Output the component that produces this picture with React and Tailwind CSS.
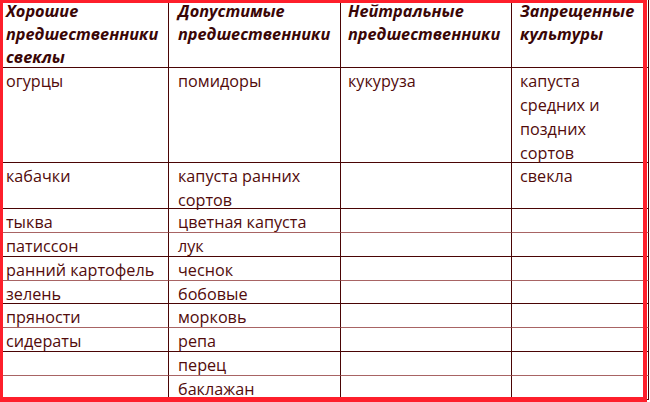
const header = [
  ['Хорошие', 'предшественники', 'свеклы'],
  ['Допустимые', 'предшественники'],
  ['Нейтральные', 'предшественники'],
  ['Запрещенные', 'культуры'],
]

// light — светлая нижняя линия строки
const rows = [
  { light: false, cells: [['огурцы'], ['помидоры'], ['кукуруза'], ['капуста', 'средних и', 'поздних', 'сортов']] },
  { light: false, cells: [['кабачки'], ['капуста ранних', 'сортов'], [], ['свекла']] },
  { light: true, cells: [['тыква'], ['цветная капуста'], [], []] },
  { light: false, cells: [['патиссон'], ['лук'], [], []] },
  { light: true, cells: [['ранний картофель'], ['чеснок'], [], []] },
  { light: false, cells: [['зелень'], ['бобовые'], [], []] },
  { light: true, cells: [['пряности'], ['морковь'], [], []] },
  { light: false, cells: [['сидераты'], ['репа'], [], []] },
  { light: true, cells: [[], ['перец'], [], []] },
  { light: false, cells: [[], ['баклажан'], [], []] },
]

const pads = ['pl-[6px]', 'pl-[9px]', 'pl-[7px]', 'pl-[8px]']

function Cell({ col, lines, light, head }) {
  return (
    <div
      className={`${pads[col]} border-r border-b border-r-[#4a0505] ${light ? 'border-b-[#a86464]' : 'border-b-[#4a0505]'} ${head ? 'font-bold italic text-[16.3px] leading-[23px] text-[#3a0606]' : 'text-[16.2px] leading-[24px] pt-[1px]'} whitespace-nowrap`}
    >
      {lines.map((l, k) => <div key={k}>{l}</div>)}
    </div>
  )
}

export default function App() {
  return (
    <div className="relative w-[650px] h-[402px] overflow-hidden bg-white" style={{ fontFamily: '"Open Sans", "Noto Sans", sans-serif' }}>
      <div className="grid grid-cols-[169px_172px_171px_137px] grid-rows-[68px_95px_46px_24px_24px_24px_23px_24px_24px_24px_24px] w-[650px] text-[#520b0b]">
        {header.map((lines, i) => (
          <Cell key={i} col={i} lines={lines} head />
        ))}
        {rows.map((r, i) =>
          r.cells.map((lines, j) => (
            <Cell key={`${i}-${j}`} col={j} lines={lines} light={r.light} />
          ))
        )}
      </div>
      <div className="absolute left-0 top-0 w-[647px] h-[402px] border-l-[3px] border-t-[3px] border-r-4 border-b-[5px] border-[#fe1f2b] pointer-events-none" />
    </div>
  )
}
